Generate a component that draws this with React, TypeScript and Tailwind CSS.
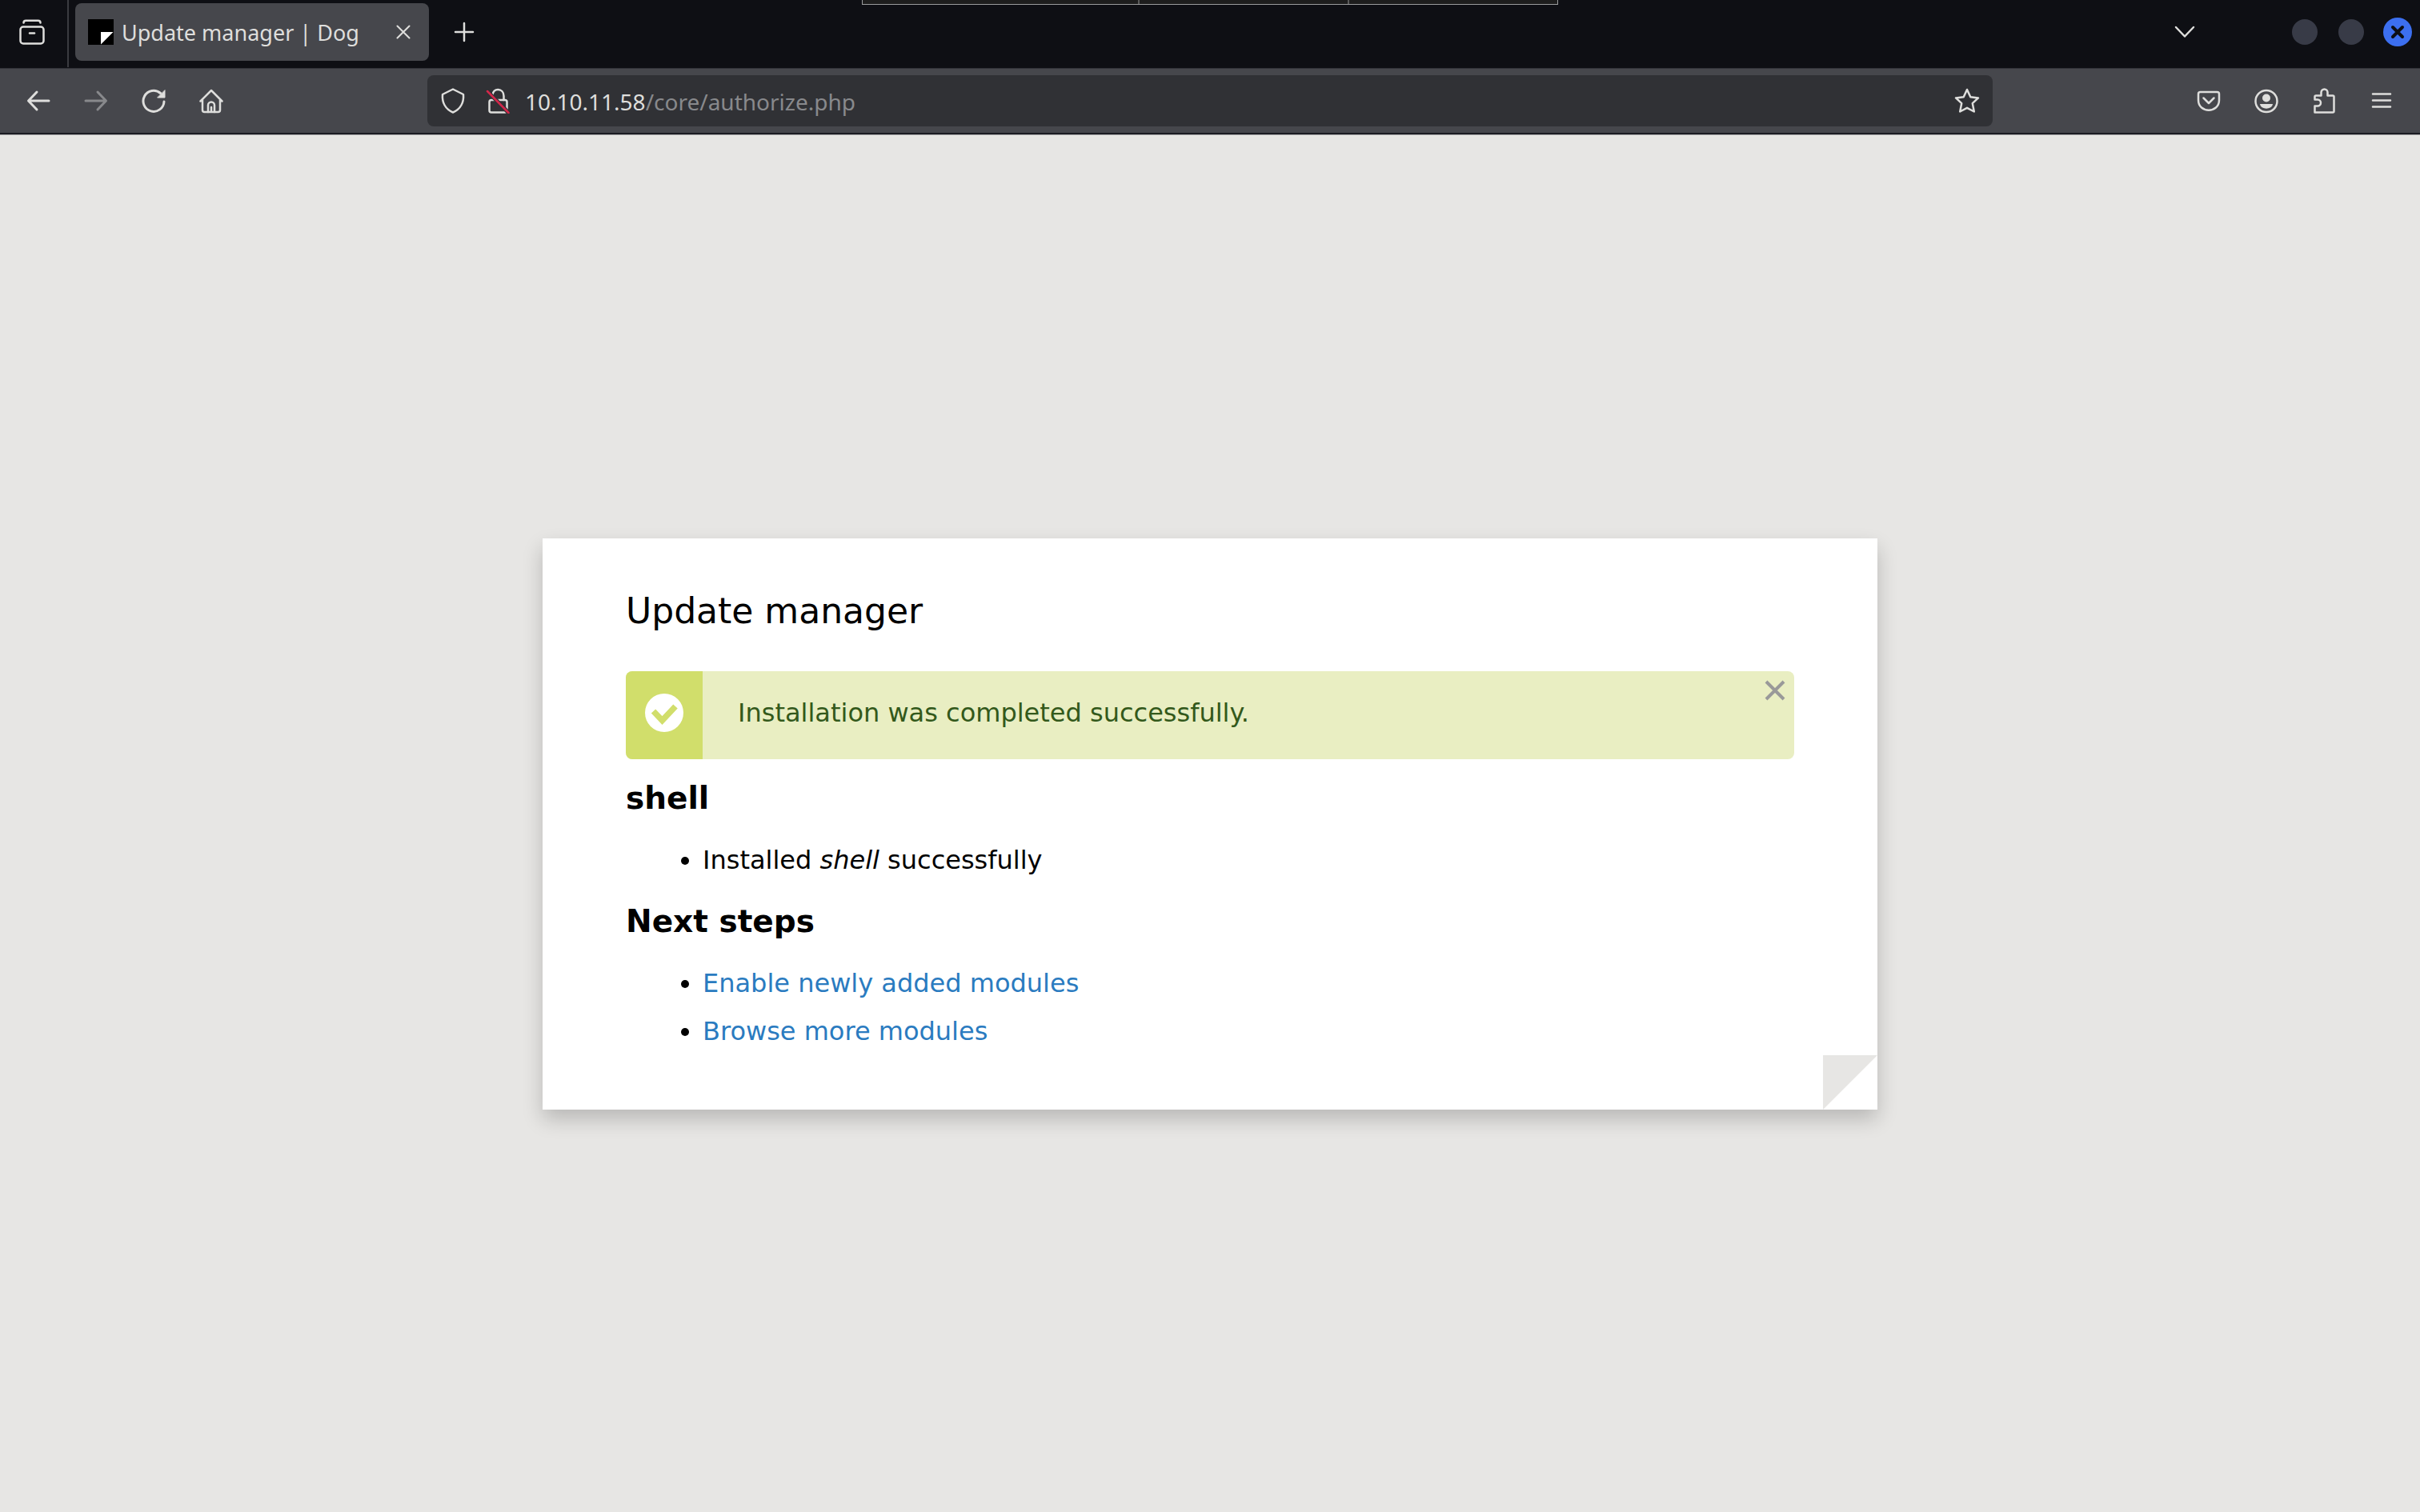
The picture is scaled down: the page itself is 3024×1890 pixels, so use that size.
import { ReactNode } from "react";

interface IconProps {
  children: ReactNode;
  className?: string;
}

// All browser icons share a 32x32 grid
const Icon = ({ children, className = "" }: IconProps) => (
  <svg
    viewBox="0 0 32 32"
    fill="none"
    stroke="currentColor"
    strokeWidth={2.5}
    strokeLinecap="round"
    strokeLinejoin="round"
    aria-hidden="true"
    className={`size-8 shrink-0 ${className}`}
  >
    {children}
  </svg>
);

interface ToolButtonProps {
  label: string;
  disabled?: boolean;
  children: ReactNode;
}

const ToolButton = ({ label, disabled, children }: ToolButtonProps) => (
  <button
    type="button"
    aria-label={label}
    disabled={disabled}
    className="flex h-16 w-[72px] shrink-0 items-center justify-center disabled:text-[#88898c]"
  >
    <Icon>{children}</Icon>
  </button>
);

const TabBar = () => (
  <header className="relative flex h-[85px] items-start bg-[#0e0f14] text-[#dededc]">
    <button
      type="button"
      aria-label="Firefox View"
      className="flex h-20 w-[84px] shrink-0 items-center justify-center pr-1"
    >
      <Icon>
        <path d="M5.5 4.5c0-1.800 1-2.800 2.800-2.800h15.400c1.800 0 2.800 1 2.800 2.800" />
        <rect x="1.500" y="9.500" width="29" height="21" rx="3.500" />
        <path d="M13 17.500h6" />
      </Icon>
    </button>
    <div className="h-[84px] w-0.5 shrink-0 bg-[#3a3b40]" />

    <div className="mt-1 ml-2 flex h-[72px] w-[442px] items-center rounded-lg bg-[#46474c] pr-4 pl-4">
      <svg viewBox="0 0 32 32" className="size-8 shrink-0" aria-hidden="true">
        <rect width="32" height="32" fill="#000" />
        <path d="M16 16h15.500L16 31.500z" fill="#fff" />
      </svg>
      <span className="ml-2.5 flex-1 pt-0.5 text-[27px] leading-10 whitespace-nowrap">Update manager | Dog</span>
      <button type="button" aria-label="Close tab" className="flex size-8 items-center justify-center">
        <Icon>
          <path strokeWidth={2} d="M8.500 8.500l15 15M23.500 8.500l-15 15" />
        </Icon>
      </button>
    </div>

    <button type="button" aria-label="New tab" className="ml-3 flex size-16 items-center justify-center pt-4">
      <Icon>
        <path d="M16 5v22M5 16h22" />
      </Icon>
    </button>

    <div className="ml-auto flex h-20 items-center pr-2.5">
      <button type="button" aria-label="List all tabs" className="mr-[118px] flex size-8 items-center justify-center">
        <Icon>
          <path d="M5 10l11 11.500L27 10" />
        </Icon>
      </button>
      <button type="button" aria-label="Minimize" className="size-8 rounded-full bg-[#383b47]" />
      <button type="button" aria-label="Maximize" className="ml-[26px] size-8 rounded-full bg-[#383b47]" />
      <button
        type="button"
        aria-label="Close window"
        className="ml-6 flex size-9 items-center justify-center rounded-full bg-[#3c6ff0] text-[#0e0f14]"
      >
        <Icon>
          <path strokeWidth={4} d="M10 10l12 12M22 10L10 22" />
        </Icon>
      </button>
    </div>

    {/* panel edge peeking in from the top of the screen */}
    <div className="absolute top-0 left-1/2 flex h-1.5 w-[870px] -translate-x-1/2 border-x border-b border-[#9a9b9d] bg-[#1d1d1d]">
      <div className="w-[346px] border-r-2 border-[#5a5a5a]" />
      <div className="w-[262px] border-r-2 border-[#5a5a5a]" />
    </div>
  </header>
);

const Toolbar = () => (
  <nav className="flex h-[83px] items-center border-t border-b-2 border-t-[#33343a] border-b-[#1c1d22] bg-[#46474c] px-3 text-[#dededc]">
    <ToolButton label="Back">
      <path strokeWidth={3} d="M29 16H4M14 5L3.500 16 14 27" />
    </ToolButton>
    <ToolButton label="Forward" disabled>
      <path strokeWidth={3} d="M3 16h25M18 5l10.500 11L18 27" />
    </ToolButton>
    <ToolButton label="Reload">
      <path strokeWidth={3} d="M29 17a13 13 0 1 1-4.500-10.500" />
      <path d="M30 3v9h-9z" fill="currentColor" strokeWidth={1} />
    </ToolButton>
    <ToolButton label="Home">
      <path d="M2.500 16.500L16 3l13.500 13.500M5 15v12.500c0 1.500 1 2.500 2.500 2.500h17c1.500 0 2.500-1 2.500-2.500V15" />
      <path d="M12 30v-8.500a4 4 0 0 1 8 0V30M16 24v5" />
    </ToolButton>

    <div className="max-w-[234px] flex-1" />

    <div className="flex h-16 flex-[7] items-center rounded-lg bg-[#303135] pr-4 pl-4">
      <button type="button" aria-label="Tracking protection">
        <Icon>
          <path d="M16 1.500L29 8c.800 10-3.500 18.500-13 22.500C6.500 26.500 2.200 18 3 8z" />
        </Icon>
      </button>
      <button type="button" aria-label="Connection is not secure" className="ml-6">
        <Icon>
          <path d="M9.500 9c0-9.500 14-9.500 14 1v5" />
          <rect x="5.500" y="15" width="22" height="15.500" rx="2.500" />
          <path d="M3 4l26.500 27" stroke="#303135" strokeWidth={5} />
          <path d="M3 4l26.500 27" stroke="#d2274a" />
        </Icon>
      </button>
      <label htmlFor="url" className="ml-[18px] pt-0.5 text-[28px] leading-10 text-[#dededc]">
        10.10.11.58
      </label>
      <input
        id="url"
        type="text"
        defaultValue="/core/authorize.php"
        className="min-w-0 flex-1 bg-transparent pt-0.5 text-[28px] leading-10 text-[#88898c] outline-none"
      />
      <button type="button" aria-label="Bookmark this page">
        <Icon>
          <path d="M16 2l4.300 9.200 9.700 1.200-7.200 6.800 2 10.300L16 24.800 7.200 29.500l2-10.300L2 12.400l9.700-1.200z" />
        </Icon>
      </button>
    </div>

    <div className="max-w-[234px] flex-1" />

    <ToolButton label="Save to Pocket">
      <path d="M5.500 5h21c1.500 0 2.500 1 2.500 2.500V15c0 17-26 17-26 0V7.500C3 6 4 5 5.500 5z" />
      <path d="M9.500 12.500l6.500 6.500 6.500-6.500" />
    </ToolButton>
    <ToolButton label="Account">
      <circle cx="16" cy="16.500" r="13.500" />
      <circle cx="16" cy="12.500" r="5" fill="currentColor" stroke="none" />
      <path d="M8 20h16c-1 7.500-15 7.500-16 0z" fill="currentColor" stroke="none" />
    </ToolButton>
    <ToolButton label="Extensions">
      <path d="M4.500 30.500v-8h3.500a4 4 0 0 0 0-8H4.500V11c0-1 .500-1.500 1.500-1.500h6.500V5.500a4 4 0 0 1 8 0v4H27c1 0 1.500.500 1.500 1.500v18c0 1-.500 1.500-1.500 1.500z" />
    </ToolButton>
    <ToolButton label="Menu">
      <path d="M5 7.500h22M5 15.500h22M5 23.500h22" />
    </ToolButton>
  </nav>
);

const UpdateManager = () => {
  const nextSteps = ["Enable newly added modules", "Browse more modules"];

  return (
    <div className="relative w-full max-w-[1668px] bg-white px-[104px] pt-16 pb-[68px] font-['DejaVu_Sans',sans-serif] text-[32px] text-black shadow-[0_12px_24px_rgba(0,0,0,0.2)]">
      <h1 className="text-[44px] leading-[54px]">Update manager</h1>

      <div className="mt-12 flex h-[110px] overflow-hidden rounded-lg bg-[#e9eec2] text-[#33591b]">
        <div className="flex w-24 items-center justify-center bg-[#d1de6b] pb-1.5">
          <svg viewBox="0 0 48 48" className="size-12" aria-hidden="true">
            <circle cx="24" cy="24" r="24" fill="#fff" />
            <path d="M10.500 22l11 11.500L38 16" fill="none" stroke="#d1de6b" strokeWidth="7.500" />
          </svg>
        </div>
        <p className="flex-1 pl-11 leading-[104px]">Installation was completed successfully.</p>
        <button type="button" aria-label="Dismiss message" className="mt-2 mr-2 flex size-8 items-center justify-center text-[#999]">
          <Icon>
            <path strokeWidth={4} strokeLinecap="butt" d="M5 5l22 22M27 5L5 27" />
          </Icon>
        </button>
      </div>

      <h2 className="mt-[22px] text-[39px] leading-[54px] font-bold">shell</h2>
      <ul className="mt-5 list-disc pl-24 leading-[60px]">
        <li>
          Installed <em>shell</em> successfully
        </li>
      </ul>

      <h2 className="mt-5 text-[39px] leading-[54px] font-bold">Next steps</h2>
      <ul className="mt-5 list-disc pl-24 leading-[60px]">
        {nextSteps.map((step) => (
          <li key={step}>
            <a href="#" className="text-[#2a7bc0]">{step}</a>
          </li>
        ))}
      </ul>

      {/* page fold */}
      <svg viewBox="0 0 68 68" className="absolute right-0 bottom-0 size-[68px]" aria-hidden="true">
        <path d="M0 0h68L0 68z" fill="#e7e6e4" />
      </svg>
    </div>
  );
};

const App = () => (
  <div className="flex min-h-screen flex-col bg-[#e7e6e4] font-['Noto_Sans',sans-serif]">
    <TabBar />
    <Toolbar />
    <main className="flex flex-1 items-center justify-center border-t border-[#a9a9aa]">
      <UpdateManager />
    </main>
  </div>
);

export default App;
